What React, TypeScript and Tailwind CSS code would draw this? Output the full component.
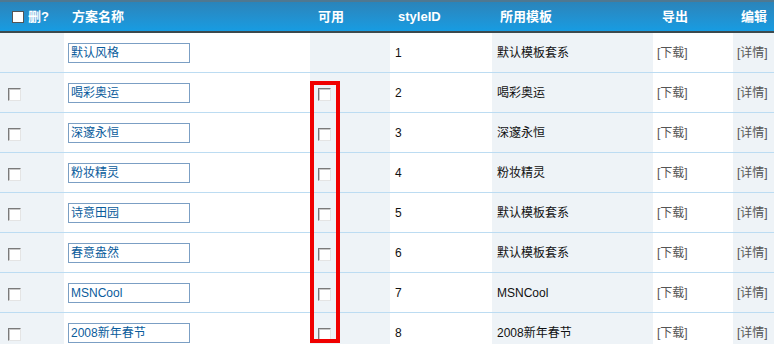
import React from "react";

const rows = [
  { name: "默认风格", id: "1", tpl: "默认模板套系", fixed: true },
  { name: "喝彩奥运", id: "2", tpl: "喝彩奥运" },
  { name: "深邃永恒", id: "3", tpl: "深邃永恒" },
  { name: "粉妆精灵", id: "4", tpl: "粉妆精灵" },
  { name: "诗意田园", id: "5", tpl: "默认模板套系" },
  { name: "春意盎然", id: "6", tpl: "默认模板套系" },
  { name: "MSNCool", id: "7", tpl: "MSNCool" },
  { name: "2008新年春节", id: "8", tpl: "2008新年春节" },
];

const cols = "grid grid-cols-[64px_246px_80px_102px_161px_80px_41px]";

// old-school inset checkbox
const Box = () => (
  <div className="w-[13px] h-[13px] bg-white border border-t-[#7a7a7a] border-l-[#7a7a7a] border-b-[#e4e4e4] border-r-[#e4e4e4] shadow-[inset_1px_1px_0_#c8c8c8]" />
);

export default function App() {
  return (
    <div
      className="relative w-[774px] h-[344px] overflow-hidden bg-white text-[12px]"
      style={{ fontFamily: '"Liberation Sans", "Noto Sans CJK SC", sans-serif' }}
    >
      {/* Header */}
      <div
        className={`${cols} h-[33px] border-t-2 border-t-[#4f7891] border-b-2 border-b-[#3c4a4e] bg-gradient-to-b from-[#2a84ba] to-[#169ce2] text-white font-bold text-[13px]`}
      >
        <div className="flex items-center pl-3 gap-1">
          <div className="w-[12px] h-[12px] bg-white border border-[#555]" />
          <span>删?</span>
        </div>
        <div className="flex items-center pl-2">方案名称</div>
        <div className="flex items-center pl-2">可用</div>
        <div className="flex items-center pl-2">styleID</div>
        <div className="flex items-center pl-2">所用模板</div>
        <div className="flex items-center pl-[9px]">导出</div>
        <div className="flex items-center pl-2">编辑</div>
      </div>

      {/* Rows */}
      {rows.map((r) => (
        <div key={r.id} className={`${cols} h-[40px] border-b border-[#bcdcf2]`}>
          <div className="flex items-center pl-2 pt-1 bg-[#eef3f7]">{!r.fixed && <Box />}</div>
          <div className="flex items-center pl-1">
            <div className="w-[122px] h-[20px] border border-[#7b9fc4] flex items-center pl-[2px] text-[#0a5c9c] leading-none">
              {r.name}
            </div>
          </div>
          <div className="flex items-center pl-2 pt-1 bg-[#eef3f7]">{!r.fixed && <Box />}</div>
          <div className="flex items-center pl-[5px] text-[#111]">{r.id}</div>
          <div className="flex items-center pl-[5px] text-[#111] bg-[#eef3f7]">{r.tpl}</div>
          <div className="flex items-center pl-1 text-[#555]">[下载]</div>
          <div className="flex items-center pl-1 text-[#555] bg-[#eef3f7]">[详情]</div>
        </div>
      ))}

      {/* Red highlight */}
      <div className="absolute left-[310px] top-[81px] w-[30px] h-[262px] border-[4px] border-[#f00000]" />
    </div>
  );
}
